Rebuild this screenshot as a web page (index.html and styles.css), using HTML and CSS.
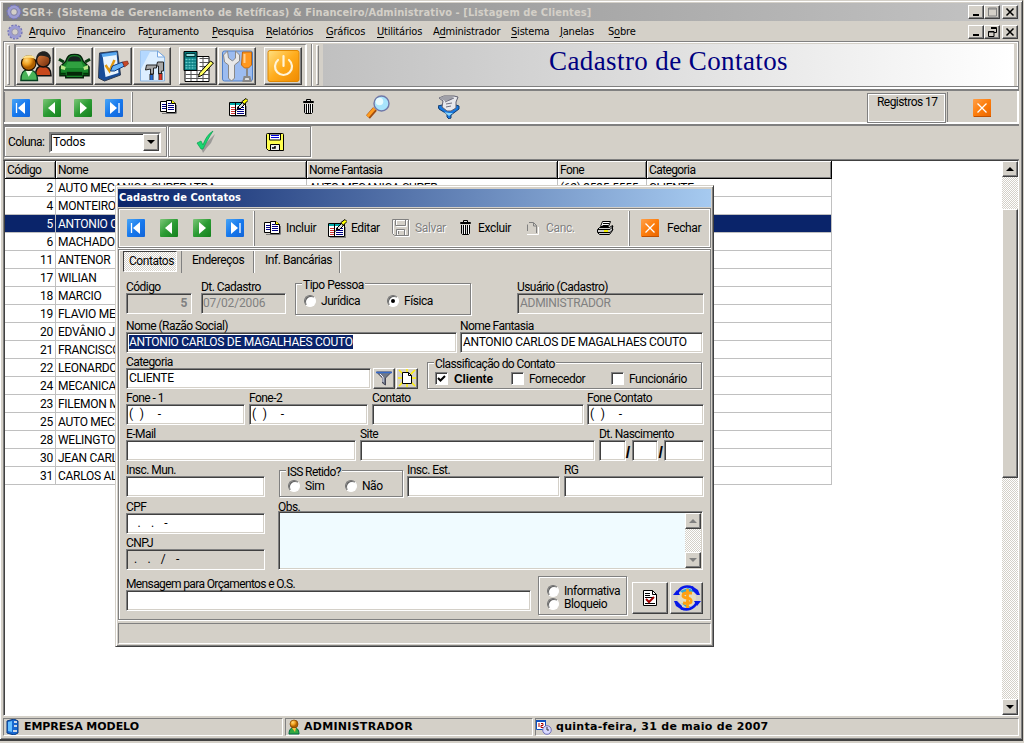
FILE: index.html
```html
<!DOCTYPE html>
<html lang="pt-BR">
<head>
<meta charset="utf-8">
<title>SGR+</title>
<link rel="stylesheet" href="styles.css">
</head>
<body>
<svg width="0" height="0" class="defs">
  <defs>
    <linearGradient id="gb" x2="1" y2="1"><stop offset="0" stop-color="#4aa5f5"/><stop offset=".5" stop-color="#1679ee"/><stop offset="1" stop-color="#1264d8"/></linearGradient>
    <linearGradient id="gg" x2="1" y2="1"><stop offset="0" stop-color="#7cc678"/><stop offset=".5" stop-color="#2c9c34"/><stop offset="1" stop-color="#14801c"/></linearGradient>
    <linearGradient id="go" x2="1" y2="1"><stop offset="0" stop-color="#ffa04a"/><stop offset=".5" stop-color="#fd7d0c"/><stop offset="1" stop-color="#e86400"/></linearGradient>
    <linearGradient id="gy" x2="1" y2="1"><stop offset="0" stop-color="#ffe080"/><stop offset=".5" stop-color="#ffac1c"/><stop offset="1" stop-color="#f08a00"/></linearGradient>
    <radialGradient id="gr" cx=".35" cy=".3"><stop offset="0" stop-color="#ffd878"/><stop offset=".6" stop-color="#f0a020"/><stop offset="1" stop-color="#b06000"/></radialGradient>
    <linearGradient id="skin" x2="1" y2="1"><stop offset="0" stop-color="#e08040"/><stop offset="1" stop-color="#6c2808"/></linearGradient>
  </defs>
  <symbol id="gear" viewBox="0 0 16 16"><circle cx="8" cy="8" r="6.600" fill="none" stroke="#7474b4" stroke-width="2" stroke-dasharray="2.200 1.200"/><circle cx="8" cy="8" r="4.900" fill="none" stroke="#9c9cd4" stroke-width="3"/><circle cx="8" cy="8" r="3.200" fill="#d4d0c8" stroke="#6868a0" stroke-width=".6"/></symbol>
  <symbol id="first" viewBox="0 0 18 18"><rect width="18" height="18" rx="1" fill="url(#gb)"/><path d="M4.500 4v10" stroke="#fff" stroke-width="1.300"/><path d="M13 3v12L6 9z" fill="#fff"/></symbol>
  <symbol id="last" viewBox="0 0 18 18"><rect width="18" height="18" rx="1" fill="url(#gb)"/><path d="M14 4v10" stroke="#fff" stroke-width="1.300"/><path d="M5 3v12l7-6z" fill="#fff"/></symbol>
  <symbol id="prev" viewBox="0 0 18 18"><rect width="18" height="18" rx="1" fill="url(#gg)"/><path d="M12 3v12L5 9z" fill="#fff"/></symbol>
  <symbol id="next" viewBox="0 0 18 18"><rect width="18" height="18" rx="1" fill="url(#gg)"/><path d="M6 3v12l7-6z" fill="#fff"/></symbol>
  <symbol id="close" viewBox="0 0 18 18"><rect width="18" height="18" rx="1" fill="url(#go)"/><path d="M4.500 4.500l9 9M13.500 4.500l-9 9" stroke="#fff" stroke-width="1.300"/><path d="M1 17.500h17" stroke="#c05000"/></symbol>
  <symbol id="copy" viewBox="0 0 17 16"><path d="M.5 2.500h6l2 2v8h-8z" fill="#fff" stroke="#000"/><path d="M2 5.500h4M2 7.500h4M2 9.500h4" stroke="#000084"/><path d="M6.500 1.500h5l4 3v9h-9z" fill="#fff" stroke="#000"/><path d="M11.500 1v3.500h4" fill="#ff0" stroke="#000"/><path d="M8 4.500h3M8 6.500h6M8 8.500h6M8 10.500h6" stroke="#000084"/><path d="M2 14.500h14.500M16.500 6v8" stroke="#777" fill="none"/></symbol>
  <symbol id="edit" viewBox="0 0 19 19"><path d="M.5 4.500h16v13H.5z" fill="#fff" stroke="#000"/><path d="M1 6h15" stroke="#0aa" stroke-width="2"/><path d="M2 9.500h4M2 11.500h4M2 13.500h4M2 15.500h4" stroke="#c33"/><path d="M6.500 5v13" stroke="#000"/><path d="M8 9.500h7M8 11.500h7M8 13.500h7M8 15.500h7" stroke="#000084"/><path d="M7 13l2-5 2 2z" fill="#000"/><path d="M9 9l5-5 2 2-5 5z" fill="#ddd" stroke="#000"/><path d="M13 3.500l4-3 2 2-4 4z" fill="#ff0" stroke="#000"/><path d="M2 18.500h16M17.500 8v10" stroke="#888"/></symbol>
  <symbol id="trash" viewBox="0 0 12 16"><path d="M3.500 2V.5h4V2M.5 2.500h10v1H.5z" fill="#ddd" stroke="#000"/><path d="M1.500 5v8.500l1 1h6l1-1V5" fill="#d8d8d8" stroke="#000"/><path d="M3.500 5v9M5.500 5v9M7.500 5v9" stroke="#000"/><path d="M4.500 5v9M8.500 5v9" stroke="#fff"/></symbol>
  <symbol id="glass" viewBox="0 0 24 24"><path d="M2 22l7-8" stroke="#a04c10" stroke-width="5"/><path d="M1.500 21.500l7-8" stroke="#ff9c20" stroke-width="3"/><circle cx="15.500" cy="8.500" r="7.500" fill="#a8e4fc" stroke="#7078a8" stroke-width="1.400"/><circle cx="13.500" cy="6.500" r="3.800" fill="#e8fbff"/></symbol>
  <symbol id="filter2" viewBox="0 0 22 24"><path d="M0 11l4-1 7 4 7-4 3 1v3l-8 6v3l-2 1-2-2v-3L1 14z" fill="#1878e0" stroke="#103c70"/><path d="M1 3l5-2h10l4 1-2 5v6l-5 3H9l-5-4 1-6z" fill="#e8e8ec" stroke="#606070"/><path d="M1 3l5-2h10l-3 4-6 1z" fill="#a0a0a8"/><path d="M7 7l9-4M8 9l6-1M8 12l5-1" stroke="#707080" fill="none"/><path d="M6 17l5 1h4l-4 3z" fill="#8bd8ff"/></symbol>
  <symbol id="tick" viewBox="0 0 20 24"><path d="M5 18l2 5q4-6 8-10l4-9-8 8z" fill="#888" opacity=".75"/><path d="M1 13l4-2 2 4C9 9 12 4 17 1 13 7 10 13 7 19H5z" fill="#18d870" stroke="#0a9c50" stroke-width=".7"/></symbol>
  <symbol id="floppy" viewBox="0 0 18 18"><path d="M.5 1.500q0-1 1-1h15q1 0 1 1v16h-15l-2-2z" fill="#ffff50" stroke="#000"/><path d="M3.500 1h11v6h-11z" fill="#fff" stroke="#000"/><path d="M5 2.500h8M5 4.500h8" stroke="#0000e0"/><path d="M4.500 11.500h9v6h-9z" fill="#eee" stroke="#000"/><path d="M6 15h3v-2" fill="none" stroke="#000" stroke-width="1.500"/></symbol>
  <symbol id="floppyoff" viewBox="0 0 18 18"><g fill="none" stroke="#fff" transform="translate(1 1)"><path d="M.5.5h16v16h-14l-2-2zM3.500.5v6h10v-6M4.500 16.500v-6h8v6"/></g><g fill="none" stroke="#808080"><path d="M.5.5h16v16h-14l-2-2zM3.500.5v6h10v-6M4.500 16.500v-6h8v6M6.500 12v3"/></g></symbol>
  <symbol id="pageoff" viewBox="0 0 12 14"><path d="M0 13.500h11.500V6" fill="none" stroke="#fff"/><path d="M.5 10V3.500M2 1.500h4.500l3 3V12M6.500 2v3H10" fill="none" stroke="#808080"/></symbol>
  <symbol id="printer" viewBox="0 0 17 16"><path d="M5.500 1.500h8l-2 5h-8z" fill="#fff" stroke="#000"/><path d="M6 3.500h6M5.500 5.500h6" stroke="#000"/><path d="M2.500 7.500h10l3-2v5l-3 4h-10l-2-2v-3z" fill="#ccc" stroke="#000"/><path d="M1 9.500h12l3-3M1 12.500h12l3-3" stroke="#000" fill="none"/><path d="M7 11h4" stroke="#ee0" stroke-width="2"/></symbol>
  <symbol id="people" viewBox="0 0 34 32"><path d="M17 26c0-8 3-10 7-10 6 0 9 3 9 10z" fill="#c8481c" stroke="#111" stroke-width="1.500"/><circle cx="25" cy="10" r="7" fill="url(#skin)" stroke="#111" stroke-width="1.500"/><path d="M18 7c1-8 14-9 15 2-4-3-10-5-15-2z" fill="#222"/><path d="M2 31c0-8 2-11 7-11 7 0 10 3 10 11z" fill="#48b458" stroke="#064020" stroke-width="1.500"/><path d="M7 21l3 6 4-6z" fill="#e8ffe8"/><circle cx="10" cy="13" r="7.500" fill="url(#gr)" stroke="#221000" stroke-width="1.200"/><path d="M3 9c1-5 13-6 14 0-4-2-10-2-14 0z" fill="#ffe490"/></symbol>
  <symbol id="car" viewBox="0 0 34 28"><path d="M8 9c2-6 4-7 9-7s7 1 9 7l6 6v9h-6v2H8v-2H2v-9z" fill="#18842a" stroke="#04200a" stroke-width="1.500"/><path d="M10 9c1-4 3-5 7-5s6 1 7 5z" fill="#182420"/><path d="M10 10h14l3 6H7z" fill="#30a040"/><path d="M9 20h16v4H9z" fill="#042808"/><path d="M3 13l5 2-1 3-4-1zM31 13l-5 2 1 3 4-1z" fill="#b8e888"/><path d="M1 7l5 3M33 7l-5 3" stroke="#083c10" stroke-width="3"/><path d="M2 22h6M26 22h6" stroke="#003808" stroke-width="2"/></symbol>
  <symbol id="clip" viewBox="0 0 32 32"><path d="M2 3L20 1l3 24L7 31 1 28z" fill="#184c98" stroke="#303c50"/><path d="M5 5l14-2 2 20-13 4z" fill="#e8f4ff"/><path d="M4 4l15-2v3L5 7z" fill="#58a8f0"/><path d="M8 15l4 6 5-11" stroke="#e09810" stroke-width="2.500" fill="none"/><path d="M13 21l2-5 10-4 2 4-10 5z" fill="#68b4f8" stroke="#0c3a80"/><path d="M25 12l5-1 1 3-4 3z" fill="#c84828" stroke="#702010" stroke-width=".6"/></symbol>
  <symbol id="doc" viewBox="0 0 26 32"><path d="M1 1h17l7 6v24H1z" fill="#dceeff" stroke="#8ab4e0"/><path d="M1 1h10L1 20z" fill="#b4d8ff"/><path d="M18 1v6h7z" fill="#fff" stroke="#78a8e0"/><path d="M7 15h10v3h-3v6h-3v-5l-5 1zM18 12h6v9h-2v3h-3v-8h-2z" fill="#a8a8a8" stroke="#222"/><path d="M12 24v6M21 23v7" stroke="#222" stroke-width="4"/><path d="M12 25v5" stroke="#2468d0" stroke-width="2.500"/><path d="M21 24v6" stroke="#e03020" stroke-width="2.500"/></symbol>
  <symbol id="calc" viewBox="0 0 32 32"><path d="M2.500 6.500h24v25h-24z" fill="#fff" stroke="#000"/><path d="M3 20.500h24M3 24.500h24M3 28.500h24M17 8.500h10M17 12.500h10M17 16.500h10M8.500 20v11M14.500 20v11M20.500 7v24" stroke="#555"/><path d="M1.500 1.500h13v19h-13z" fill="#087c80" stroke="#000"/><path d="M3.500 3.500h9v3h-9z" fill="#9dd" stroke="#033"/><path d="M3 9.500h10M3 12.500h10M3 15.500h10M3 18h10" stroke="#6cc" stroke-width="1.600" stroke-dasharray="2 1"/><path d="M16 27l1-4L28 11l3 2-11 12z" fill="#ffff60" stroke="#000"/></symbol>
  <symbol id="tools" viewBox="0 0 32 32"><path d="M1 3q0-2 2-2h26q2 0 2 2v26q0 2-2 2H3q-2 0-2-2z" fill="#9cbcf0" stroke="#5080c8"/><path d="M6 1L2 5l1 7 4 3v13q3 5 6 0V15l5-4V5l-4-4v7l-3 3-4-3z" fill="#e8e8e8" stroke="#888"/><path d="M21 2h9v13l-3 3h-4l-3-3z" fill="#ff9820" stroke="#c06810"/><path d="M23 4v9" stroke="#ffd090" stroke-width="2"/><path d="M25.500 18v9M23 27h5l1 4h-7z" fill="#ddd" stroke="#888" stroke-width="2"/></symbol>
  <symbol id="power" viewBox="0 0 32 32"><rect x=".5" y=".5" width="31" height="31" rx="2" fill="url(#gy)" stroke="#e08800"/><path d="M10.500 10a8.500 8.500 0 1 0 11 0M16 6v10" fill="none" stroke="#fff4d8" stroke-width="2.200" stroke-linecap="round"/></symbol>
  <symbol id="funnel" viewBox="0 0 16 15"><path d="M.5 1h15l-6 6v7l-3-2V7z" fill="#707888" stroke="#445"/><path d="M0 1.500h16" stroke="#3468c8" stroke-width="1.500"/><path d="M4 3l3 3v5" stroke="#eef" fill="none"/></symbol>
  <symbol id="newpage" viewBox="0 0 18 18"><path d="M1 1l16 16M17 1L1 17M9 0v18M0 9h18" stroke="#fff000" stroke-width="1.500"/><path d="M4.500 3.500h6l3 3v8h-9z" fill="#fff" stroke="#000"/><path d="M10.500 3.500v3h3" fill="none" stroke="#000"/></symbol>
  <symbol id="report" viewBox="0 0 14 16"><path d="M.5 .5h9l4 4v11H.5z" fill="#fff" stroke="#000"/><path d="M9.500.5v4h4M2 3.500h5M2 5.500h5M2 7.500h9M2 13.500h10" stroke="#000" fill="none"/><path d="M3 9l3 3 5-5" fill="none" stroke="#a00000" stroke-width="2"/></symbol>
  <symbol id="cash" viewBox="0 0 28 26"><circle cx="14" cy="13" r="9" fill="#e4dcc0"/><path d="M7 6l5 4 10-4-7-3zM8 18l5 4h5z" fill="#30a8d8"/><path d="M4 9C7 2 13 0 20 3M24 17C21 24 14 26 8 23" fill="none" stroke="#0818e8" stroke-width="2.600"/><path d="M0 10h7l-3-5zM28 16h-7l3 5zM24 10l3 0-2-5-6-4v4zM4 16H1l2 5 6 4v-4z" fill="#0818e8"/><path d="M19 8h-6q-3 0-3 3 1 2 5 2 4 1 3 4-1 2-8 1M14.500 4v19" stroke="#ffa010" stroke-width="2.800" fill="none"/></symbol>
  <symbol id="srv" viewBox="0 0 13 16"><path d="M1 2l7-2 4 2v12l-4 2-7-2z" fill="#1868d0" stroke="#083880"/><path d="M2 3l4-1v11l-4-1z" fill="#68c0ff"/><path d="M8 3h3M8 7h3M7 12h4" stroke="#ccd8e8" stroke-width="2"/></symbol>
  <symbol id="user" viewBox="0 0 12 16"><path d="M1 15c0-9 10-9 10 0z" fill="#30a840" stroke="#064"/><circle cx="6" cy="5" r="4" fill="url(#gr)" stroke="#804000" stroke-width=".7"/><path d="M4 9h4l-1 4z" fill="#ffc040"/></symbol>
  <symbol id="cal" viewBox="0 0 16 16"><path d="M.5 1.500h9v9h-9z" fill="#fff" stroke="#1050c0"/><path d="M0 2h10" stroke="#1050c0" stroke-width="2"/><path d="M3 4v4M5 4.500h2v2H5v2h3" stroke="#a00" fill="none"/><circle cx="11" cy="11" r="4.300" fill="#d8d8ff" stroke="#7070b8"/><path d="M11 8v3h2" stroke="#333" fill="none"/></symbol>
</svg>

<div class="window">
  <header class="caption"><svg class="i16"><use href="#gear"/></svg><span class="captext">SGR+ (Sistema de Gerenciamento de Retíficas) &amp; Financeiro/Administrativo - [Listagem de Clientes]</span>
    <span class="winbtns"><b><svg viewBox="0 0 12 10"><path d="M3 8h6" stroke="#000" stroke-width="2"/></svg></b><b><svg viewBox="0 0 12 10"><path d="M2.500 1h8v8h-8zM2.500 2h8" fill="none" stroke="#808080"/></svg></b><b class="gap2"><svg viewBox="0 0 12 10"><path d="M2.500 1.500l7 7M9.500 1.500l-7 7" stroke="#000" stroke-width="1.500"/></svg></b></span>
  </header>
  <nav class="menu"><svg class="i16"><use href="#gear"/></svg>
    <span class="m1"><u>A</u>rquivo</span><span class="m2"><u>F</u>inanceiro</span><span class="m3">Fa<u>t</u>uramento</span><span class="m4"><u>P</u>esquisa</span><span class="m5"><u>R</u>elatórios</span><span class="m6"><u>G</u>ráficos</span><span class="m7"><u>U</u>tilitários</span><span class="m8">A<u>d</u>ministrador</span><span class="m9"><u>S</u>istema</span><span class="m10"><u>J</u>anelas</span><span class="m11">S<u>o</u>bre</span>
    <span class="winbtns"><b><svg viewBox="0 0 12 10"><path d="M3 8h6" stroke="#000" stroke-width="2"/></svg></b><b><svg viewBox="0 0 12 10"><path d="M5 .5h5.500v5H8M5 1.500h5M2.500 4.500H8v5H2.500zM2.500 5h5.500" fill="none" stroke="#000"/></svg></b><b class="gap2"><svg viewBox="0 0 12 10"><path d="M2.500 1.500l7 7M9.500 1.500l-7 7" stroke="#000" stroke-width="1.500"/></svg></b></span>
  </nav>

  <div class="toolbar">
    <i class="grip"></i>
    <div class="bigbtns"><b><svg><use href="#people"/></svg></b><b><svg><use href="#car"/></svg></b><b><svg><use href="#clip"/></svg></b><b><svg><use href="#doc"/></svg></b><b class="space"><svg><use href="#calc"/></svg></b><b><svg><use href="#tools"/></svg></b><b class="space"><svg><use href="#power"/></svg></b></div>
    <i class="sep"></i><i class="grip g2"></i>
    <div class="banner">Cadastro de Contatos</div>
  </div>

  <div class="navrow">
    <div class="navgroup"><svg><use href="#first"/></svg><svg><use href="#prev"/></svg><svg><use href="#next"/></svg><svg><use href="#last"/></svg></div>
    <div class="actions"><svg class="a1"><use href="#copy"/></svg><svg class="a2"><use href="#edit"/></svg><svg class="a3"><use href="#trash"/></svg><svg class="a4"><use href="#glass"/></svg><svg class="a5"><use href="#filter2"/></svg></div>
    <div class="count">Registros 17</div>
    <div class="closebox"><svg class="i18"><use href="#close"/></svg></div>
  </div>

  <div class="filterrow">
    <div class="colbox"><span class="collabel">Coluna:</span><div class="combo"><span>Todos</span><b class="btn"><i class="dn"></i></b></div></div>
    <div class="okbox"><svg class="tick"><use href="#tick"/></svg><svg class="i18"><use href="#floppy"/></svg></div>
  </div>

  <main class="grid">
    <div class="table">
      <div class="r head"><span>Código</span><span>Nome</span><span>Nome Fantasia</span><span>Fone</span><span>Categoria</span></div>
      <div class="r"><span>2</span><span>AUTO MECANICA SUPER LTDA</span><span>AUTO MECANICA SUPER</span><span>(62) 3535-5555</span><span>CLIENTE</span></div>
      <div class="r"><span>4</span><span>MONTEIRO</span><span></span><span></span><span></span></div>
      <div class="r sel"><span>5</span><span>ANTONIO CARLOS</span><span></span><span></span><span></span></div>
      <div class="r"><span>6</span><span>MACHADO</span><span></span><span></span><span></span></div>
      <div class="r"><span>11</span><span>ANTENOR</span><span></span><span></span><span></span></div>
      <div class="r"><span>17</span><span>WILIAN</span><span></span><span></span><span></span></div>
      <div class="r"><span>18</span><span>MARCIO</span><span></span><span></span><span></span></div>
      <div class="r"><span>19</span><span>FLAVIO ME</span><span></span><span></span><span></span></div>
      <div class="r"><span>20</span><span>EDVÂNIO J</span><span></span><span></span><span></span></div>
      <div class="r"><span>21</span><span>FRANCISCO</span><span></span><span></span><span></span></div>
      <div class="r"><span>22</span><span>LEONARDO</span><span></span><span></span><span></span></div>
      <div class="r"><span>24</span><span>MECANICA</span><span></span><span></span><span></span></div>
      <div class="r"><span>23</span><span>FILEMON M</span><span></span><span></span><span></span></div>
      <div class="r"><span>25</span><span>AUTO MECA</span><span></span><span></span><span></span></div>
      <div class="r"><span>28</span><span>WELINGTO</span><span></span><span></span><span></span></div>
      <div class="r"><span>30</span><span>JEAN CARL</span><span></span><span></span><span></span></div>
      <div class="r"><span>31</span><span>CARLOS AL</span><span></span><span></span><span></span></div>
    </div>
    <div class="scroll"><b class="btn"><i class="up"></i></b><div class="track"></div><div class="thumb btn"></div><div class="track fill"></div><b class="btn"><i class="dn"></i></b></div>
  </main>

  <footer class="status">
    <div class="s1"><svg class="srv"><use href="#srv"/></svg>EMPRESA MODELO</div>
    <div class="s2"><svg class="usr"><use href="#user"/></svg>ADMINISTRADOR</div>
    <div class="s3"><svg class="i16"><use href="#cal"/></svg>quinta-feira, 31 de maio de 2007</div>
  </footer>
</div>

<section class="dialog">
  <div class="dcap">Cadastro de Contatos</div>
  <div class="dtools">
    <div class="dnav"><svg><use href="#first"/></svg><svg><use href="#prev"/></svg><svg><use href="#next"/></svg><svg><use href="#last"/></svg></div>
    <div class="dact"><svg class="d1"><use href="#copy"/></svg><span class="t1">Incluir</span><svg class="d2"><use href="#edit"/></svg><span class="t2">Editar</span><svg class="d3"><use href="#floppyoff"/></svg><span class="t3 off">Salvar</span><svg class="d4"><use href="#trash"/></svg><span class="t4">Excluir</span><svg class="d5"><use href="#pageoff"/></svg><span class="t5 off">Canc.</span><svg class="d6"><use href="#printer"/></svg></div>
    <div class="dclose"><svg class="i18"><use href="#close"/></svg><span>Fechar</span></div>
  </div>
  <div class="body">
    <div class="tabs"><span class="on">Contatos</span><span class="tb2">Endereços</span><span class="tb3">Inf. Bancárias</span></div>
    <div class="form">
      <div class="row row1">
        <div class="f w66"><label>Código</label><div class="in ro num">5</div></div>
        <div class="f w85 ml9"><label>Dt. Cadastro</label><div class="in ro date">07/02/2006</div></div>
        <div class="group tipo"><em>Tipo Pessoa</em><i class="radio"></i><span class="o1">Jurídica</span><i class="radio on"></i><span>Física</span></div>
        <div class="f usr-f"><label>Usuário (Cadastro)</label><div class="in ro">ADMINISTRADOR</div></div>
      </div>
      <div class="row">
        <div class="f w331"><label>Nome (Razão Social)</label><div class="in"><span class="hl">ANTONIO CARLOS DE MAGALHAES COUTO</span></div></div>
        <div class="f w243 ml3"><label>Nome Fantasia</label><div class="in">ANTONIO CARLOS DE MAGALHAES COUTO</div></div>
      </div>
      <div class="row">
        <div class="f w245"><label>Categoria</label><div class="in">CLIENTE</div></div>
        <b class="btn mini"><svg class="fn"><use href="#funnel"/></svg></b><b class="btn mini m2b"><svg class="i18"><use href="#newpage"/></svg></b>
        <div class="group cls"><em>Classificação do Contato</em><i class="check"><svg viewBox="0 0 9 9"><path d="M1 4l2.500 2.500L8 2" fill="none" stroke="#000" stroke-width="2"/></svg></i><span class="c1"><strong>Cliente</strong></span><i class="check"></i><span class="c2">Fornecedor</span><i class="check"></i><span class="c3">Funcionário</span></div>
      </div>
      <div class="row">
        <div class="f w119"><label>Fone - 1</label><div class="in mask">(  )    -</div></div>
        <div class="f w119 ml4"><label>Fone-2</label><div class="in mask">(  )    -</div></div>
        <div class="f w212 ml4"><label>Contato</label><div class="in"></div></div>
        <div class="f w117 ml3"><label>Fone Contato</label><div class="in mask">(  )    -</div></div>
      </div>
      <div class="row">
        <div class="f w230"><label>E-Mail</label><div class="in"></div></div>
        <div class="f w235 ml4"><label>Site</label><div class="in"></div></div>
        <div class="f ml4 w105"><label>Dt. Nascimento</label><div class="dates"><div class="in"></div><strong>/</strong><div class="in"></div><strong>/</strong><div class="in yr"></div></div></div>
      </div>
      <div class="row row6">
        <div class="f w139"><label>Insc. Mun.</label><div class="in"></div></div>
        <div class="group iss"><em>ISS Retido?</em><i class="radio"></i><span class="o3">Sim</span><i class="radio"></i><span>Não</span></div>
        <div class="f w153 ml4"><label>Insc. Est.</label><div class="in"></div></div>
        <div class="f w140 ml4"><label>RG</label><div class="in"></div></div>
      </div>
      <div class="duo">
        <div class="left"><div class="f"><label>CPF</label><div class="in mask cpf">   .   .   -</div></div><div class="f"><label>CNPJ</label><div class="in ro mask k">  .   .   /   -</div></div></div>
        <div class="obs"><label>Obs.</label><div class="in area"><div class="scroll dis"><b class="btn"><i class="up"></i></b><div class="track fill"></div><b class="btn"><i class="dn"></i></b></div></div></div>
      </div>
      <div class="row last">
        <div class="f w405"><label class="msg">Mensagem para Orçamentos e O.S.</label><div class="in"></div></div>
        <div class="group inf"><div><i class="radio"></i><span>Informativa</span></div><div><i class="radio"></i><span>Bloqueio</span></div></div>
        <b class="btn sq1"><svg class="rp"><use href="#report"/></svg></b><b class="btn sq2"><svg class="cs"><use href="#cash"/></svg></b>
      </div>
    </div>
  </div>
  <div class="dstatus"></div>
</section>
</body>
</html>
```

FILE: styles.css
```css
* { box-sizing: border-box; }
body { margin: 0; width: 1024px; height: 743px; overflow: hidden; background: #d4d0c8; color: #000; font: 12px/14px Roboto, "Liberation Sans", sans-serif; letter-spacing: -.55px; }
svg { display: block; flex: none; }
.defs { position: absolute; }
.i16 { width: 16px; height: 16px; }
.i18 { width: 18px; height: 18px; }
span, label { white-space: pre; }

.window { width: 1023px; height: 741px; padding: 1px 3px 2px; border-top: 1px solid #d4d0c8; border-right: 1px solid #404040; border-bottom: 2px solid #404040; box-shadow: inset 1px 1px #fff, inset -1px -1px #808080; display: flex; flex-direction: column; }
.caption { height: 18px; margin-top: 1px; display: flex; align-items: center; padding: 0 1px 0 3px; background: linear-gradient(90deg, #808080, #c4c4c4); color: #d4d0c8; font: bold 11px/16px "DejaVu Sans Condensed", "DejaVu Sans", sans-serif; letter-spacing: .09px; }
.captext { margin-top: 1px; }
.winbtns { margin-left: auto; display: flex; }
.winbtns b { width: 16px; height: 14px; background: #d4d0c8; border: 1px solid; border-color: #fff #404040 #404040 #fff; box-shadow: inset -1px -1px #808080; padding: 1px; }
.winbtns svg { width: 12px; height: 10px; }
.winbtns .gap2 { margin-left: 2px; }
.menu { height: 20px; display: flex; align-items: center; padding: 1px 1px 0 4px; font: 11px/14px "DejaVu Sans Condensed", "Noto Sans", sans-serif; letter-spacing: -.2px; }
.menu .m1 { width: 48px; margin-left: 6px; }
.m2 { width: 61px; } .m3 { width: 74px; } .m4 { width: 54px; } .m5 { width: 60px; } .m6 { width: 51px; } .m7 { width: 56px; } .m8 { width: 78px; } .m9 { width: 49px; } .m10 { width: 48px; }
.menu u { text-underline-offset: 2px; }

.toolbar { height: 48px; border: 1px solid #808080; border-bottom: 0; box-shadow: inset 1px 1px #fff, inset 0 -2px #fff, inset 0 -3px #808080, inset -1px 0 #fff; display: flex; padding: 2px 4px 3px 3px; }
.grip { width: 3px; height: 40px; margin-top: 1px; border: 1px solid; border-color: #fff #808080 #808080 #fff; }
.bigbtns { display: flex; margin-left: 4px; border-top: 1px solid #808080; border-left: 2px solid #808080; border-right: 2px solid #fff; padding: 2px 2px 0 0; height: 42px; }
.bigbtns b { width: 38px; height: 38px; margin-right: 1px; background: #d8d4cc; border: 1px solid; border-color: #fff #404040 #404040 #fff; box-shadow: inset -1px -1px #808080; display: flex; align-items: center; justify-content: center; }
.bigbtns .space { margin-left: 7px; }
.bigbtns svg { width: 33px; height: 32px; }
.sep { width: 2px; margin-left: 4px; border-left: 1px solid #808080; border-right: 1px solid #fff; }
.g2 { margin-left: 3px; }
.banner { flex: 1; margin-left: 4px; height: 42px; background: linear-gradient(90deg, #c0c0c0, #fff); color: #000080; font: 27px/35px "Liberation Serif", serif; letter-spacing: .4px; text-align: center; }

.navrow { height: 37px; border: 2px solid #808080; border-width: 2px 0 2px 1px; box-shadow: inset 0 -2px #fff, inset -2px 0 #fff; display: flex; padding: 1px 2px 2px 0; }
.navgroup { width: 128px; border-right: 1px solid #fff; border-left: 1px solid #808080; display: flex; gap: 13px; align-items: center; padding: 1px 0 0 7px; }
.navgroup svg, .dnav svg { width: 18px; height: 18px; }
.actions { flex: 1; display: flex; align-items: center; border-left: 1px solid #808080; }
.a1 { width: 17px; height: 16px; margin-left: 27px; }
.a2 { width: 19px; height: 19px; margin-left: 52px; }
.a3 { width: 12px; height: 16px; margin-left: 55px; }
.a4 { width: 24px; height: 24px; margin-left: 51px; }
.a5 { width: 22px; height: 24px; margin-left: 48px; }
.count { width: 79px; margin-top: 1px; height: 30px; border: 1px solid #808080; box-shadow: inset 1px 1px #fff, inset -1px -1px #fff; padding: 1px 0 0 9px; }
.closebox { width: 70px; margin-left: 1px; border-left: 1px solid #808080; display: flex; align-items: center; justify-content: center; padding: 1px 2px 0 0; }

.filterrow { height: 34px; display: flex; border-left: 1px solid #808080; border-bottom: 1px solid #808080; gap: 1px; padding-bottom: 2px; }
.colbox, .okbox { border: 1px solid #808080; box-shadow: inset 1px 1px #fff, 1px 1px #fff; display: flex; align-items: center; padding-top: 1px; }
.colbox { width: 163px; padding-left: 3px; }
.collabel { width: 41px; }
.combo { width: 112px; height: 21px; background: #fff; border: 2px solid; border-color: #808080 #fff #fff #808080; box-shadow: inset 1px 1px #404040; display: flex; padding-left: 2px; line-height: 17px; letter-spacing: -.2px; }
.btn { background: #d4d0c8; border: 1px solid; border-color: #fff #404040 #404040 #fff; box-shadow: inset -1px -1px #808080; display: flex; align-items: center; justify-content: center; }
.combo .btn { width: 16px; height: 17px; margin-left: auto; }
.up, .dn { border: 4px solid transparent; width: 0; height: 0; }
.dn { border-top-color: #000; border-bottom: 0; }
.up { border-bottom-color: #000; border-top: 0; }
.okbox { width: 143px; }
.tick { width: 20px; height: 24px; margin-left: 27px; }
.okbox .i18 { margin-left: 50px; }

.grid { height: 556px; flex: none; background: #fff; border: 1px solid #404040; border-color: #404040 #fff #fff #808080; box-shadow: inset 1px 0 #404040; padding-left: 1px; display: flex; justify-content: space-between; }
.table { width: 827px; }
.r { display: grid; grid-template-columns: 51px 251px 251px 89px 185px; height: 18px; letter-spacing: -.28px; }
.r span { border-right: 1px solid #c0c0c0; border-bottom: 1px solid #c0c0c0; overflow: hidden; padding: 2px 2px 0 2px; line-height: 14px; }
.r:not(.head) span:first-child { text-align: right; }
.r.sel span { background: #0a246a; color: #fff; }
.r.head { letter-spacing: -.6px; }
.head span { background: #d4d0c8; border-color: #000; box-shadow: inset 1px 1px #fff, inset -1px -1px #808080; }
.scroll { width: 16px; display: flex; flex-direction: column; }
.scroll > .btn { width: 16px; }
.scroll > b { height: 16px; }
.track { height: 32px; background: repeating-conic-gradient(#fff 0 25%, #d4d0c8 0 50%) 0 0 / 2px 2px; }
.track.fill { flex: 1; height: auto; }
.thumb { height: 269px; }

.status { margin-top: 2px; display: flex; gap: 2px; height: 18px; flex: none; font: bold 11px/16px "DejaVu Sans", sans-serif; letter-spacing: .28px; }
.status div { display: flex; align-items: center; border: 1px solid; border-color: #808080 #fff #fff #808080; padding-left: 2px; white-space: pre; }
.status .s1 { width: 280px; letter-spacing: -.05px; } .s2 { width: 248px; } .s3 { flex: 1; }
.srv { width: 13px; height: 16px; margin-right: 5px; }
.usr { width: 12px; height: 16px; margin-right: 4px; }
.status .s3 { padding-left: 0; }
.s3 .i16 { margin-right: 4px; }

.dialog { position: absolute; left: 115px; top: 185px; width: 599px; height: 462px; background: #d4d0c8; border: 1px solid; border-color: #d4d0c8 #404040 #404040 #d4d0c8; box-shadow: inset 1px 1px #fff, inset -1px -1px #808080; padding: 3px 2px 2px; display: flex; flex-direction: column; }
.dcap { height: 18px; background: linear-gradient(90deg, #0a246a, #a6caf0); color: #fff; font: bold 11px/17px "DejaVu Sans Condensed", "DejaVu Sans", sans-serif; letter-spacing: .07px; padding-left: 1px; }
.dtools { height: 40px; margin-top: 1px; display: flex; border: 1px solid #808080; box-shadow: inset 1px 1px #fff, inset -1px -1px #fff, 0 1px #fff; padding: 2px 2px 1px 1px; letter-spacing: -.35px; }
.dnav { width: 134px; display: flex; align-items: center; border-right: 1px solid #fff; }
.dnav svg { margin-left: 7px; }
.dnav svg + svg { margin-left: 15px; }
.dact { width: 375px; display: flex; align-items: center; border-left: 1px solid #808080; border-right: 1px solid #fff; }
.d1 { width: 17px; height: 16px; margin-left: 9px; } .t1 { width: 42px; margin-left: 5px; }
.d2 { width: 19px; height: 19px; } .t2 { width: 41px; margin-left: 4px; }
.d3 { width: 18px; height: 18px; } .t3 { width: 45px; margin-left: 5px; }
.d4 { width: 12px; height: 16px; } .t4 { width: 49px; margin-left: 6px; }
.d5 { width: 12px; height: 14px; } .t5 { width: 51px; margin-left: 7px; }
.d6 { width: 17px; height: 16px; }
.off { color: #808080; text-shadow: 1px 1px #fff; }
.dclose { flex: 1; border-left: 1px solid #808080; display: flex; align-items: center; padding-left: 11px; gap: 8px; }
.body { height: 372px; margin-top: 1px; border: 1px solid #808080; box-shadow: inset 1px 1px #fff, inset -1px -1px #d4d0c8, 0 1px #fff; padding-left: 7px; }
.tabs { height: 23px; display: flex; padding-top: 1px; margin-left: -3px; letter-spacing: -.45px; }
.tabs .on { width: 54px; height: 21px; padding: 2px 0 0 5px; border: 1px solid; border-color: #404040 #fff #fff #404040; background: repeating-conic-gradient(#fff 0 25%, #d4d0c8 0 50%) 0 0 / 2px 2px; }
.tb2, .tb3 { padding-top: 2px; border-right: 1px solid #808080; box-shadow: 1px 0 #fff; }
.tb2 { width: 73px; margin-left: 4px; padding-left: 10px; border-left: 1px solid #808080; }
.tb3 { width: 86px; padding-left: 11px; }

.row { height: 36px; display: flex; align-items: flex-start; }
.row1 { margin-top: 8px; height: 39px; }
.f label, .obs label { display: block; height: 12px; line-height: 13px; }
.f .msg { letter-spacing: -.62px; }
.in { height: 21px; background: #fff; border: 1px solid; border-color: #808080 #fff #fff #808080; box-shadow: inset 1px 1px #404040, inset -1px -1px #d4d0c8; padding: 2px 2px 0; line-height: 14px; white-space: pre; overflow: hidden; letter-spacing: -.28px; }
.ro { background: #d4d0c8; color: #808080; }
.ro.k { color: #000; word-spacing: .9px; padding-left: 0; }
.num { text-align: right; padding-right: 4px; font-weight: bold; }
.date { letter-spacing: -.15px; padding-left: 1px; }
.hl { background: #0a246a; color: #fff; }
.mask { letter-spacing: -.35px; word-spacing: .9px; }
.cpf { padding-left: 0; }
.w66 { width: 66px; } .w85 { width: 85px; } .w331 { width: 331px; } .w243 { width: 243px; } .w245 { width: 245px; } .w119 { width: 119px; } .w212 { width: 212px; } .w117 { width: 117px; } .w230 { width: 230px; } .w235 { width: 235px; } .w105 { width: 105px; } .w139 { width: 139px; } .w153 { width: 153px; } .w140 { width: 140px; } .w405 { width: 405px; }
.ml3 { margin-left: 3px; } .ml4 { margin-left: 4px; } .ml9 { margin-left: 9px; }
.usr-f { width: 187px; margin-left: 46px; }
.group { position: relative; border: 1px solid #808080; box-shadow: inset 1px 1px #fff, 1px 1px #fff; display: flex; align-items: center; }
.group em { position: absolute; left: 6px; top: -5px; background: #d4d0c8; font-style: normal; line-height: 12px; padding: 0 1px; white-space: nowrap; letter-spacing: -.6px; }
.tipo em { letter-spacing: -.5px; }
.radio { width: 12px; height: 12px; border-radius: 50%; background: #fff; border: 1px solid; border-color: #707070 #fff #fff #707070; box-shadow: inset 1px 1px #606060; flex: none; display: flex; align-items: center; justify-content: center; }
.radio.on::after { content: ""; width: 4px; height: 4px; border-radius: 50%; background: #000; }
.check { width: 13px; height: 13px; background: #fff; border: 1px solid; border-color: #808080 #fff #fff #808080; box-shadow: inset 1px 1px #404040; flex: none; padding: 1px; }
.check svg { width: 9px; height: 9px; }
.group span { margin-left: 5px; letter-spacing: -.45px; }
.tipo { width: 176px; height: 32px; margin: 2px 0 0 9px; padding: 4px 0 0 8px; }
.tipo .o1 { width: 66px; }
.mini { width: 22px; height: 21px; margin: 12px 0 0 2px; }
.m2b { margin-left: 1px; }
.fn { width: 16px; height: 15px; }
.cls { width: 275px; height: 27px; margin: 6px 0 0 9px; padding: 7px 0 0 7px; }
.cls .c1 { width: 56px; margin-left: 6px; } .cls .c2 { width: 82px; } .cls .c3 { margin-left: 5px; }
.cls .c1 + .check { margin-left: 1px; }
.cls .c1 strong { font: bold 12px/14px "Liberation Sans", sans-serif; letter-spacing: -.15px; }
.dates { display: flex; }
.dates .in { width: 27px; }
.dates .yr { width: 40px; }
.dates strong { width: 6px; font: bold 16px/26px "Liberation Sans", sans-serif; letter-spacing: 0; }
.row6 { height: 37px; }
.iss { width: 124px; height: 27px; margin: 6px 0 0 14px; padding: 5px 0 0 8px; }
.iss .o3 { width: 40px; }
.duo { display: flex; height: 77px; }
.left { width: 139px; }
.left .f { height: 36px; }
.obs { width: 425px; margin-left: 13px; }
.obs .area { height: 59px; margin-top: -2px; background: #f0fbff; padding: 1px 1px 1px 0; display: flex; justify-content: flex-end; }
.dis .up { border-bottom-color: #808080; }
.dis .dn { border-top-color: #808080; }
.obs .scroll { height: 55px; }
.last .inf { width: 89px; height: 39px; margin: -2px 0 0 7px; display: block; padding: 8px 0 0 8px; }
.inf div { display: flex; align-items: center; height: 13px; }
.sq1, .sq2 { height: 32px; margin-top: 4px; }
.sq1 { width: 36px; margin-left: 5px; }
.sq2 { width: 33px; margin-left: 2px; }
.rp { width: 14px; height: 16px; }
.cs { width: 28px; height: 26px; }
.dstatus { height: 21px; margin-top: 3px; border: 1px solid; border-color: #808080 #fff #fff #808080; }
```
